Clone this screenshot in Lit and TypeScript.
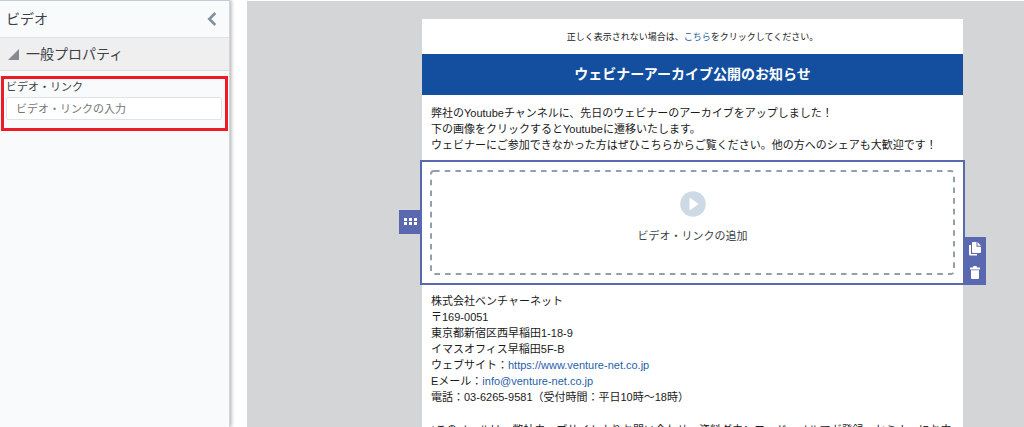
import { LitElement, html, css } from "lit";
import { customElement } from "lit/decorators.js";

@customElement("property-panel")
class PropertyPanel extends LitElement {
  static styles = css`
    :host {
      display: block;
      box-sizing: border-box;
      background: #f9fafc;
      border-top: 1px solid #c4cbd2;
      border-right: 1px solid #d2d6da;
      box-shadow: 1px 0 4px rgba(0, 0, 0, 0.35);
      color: #3c4146;
    }
    .head {
      display: flex;
      align-items: center;
      justify-content: space-between;
      height: 36px;
      padding: 0 12px 0 6px;
      border-bottom: 1px solid #dfe3e7;
    }
    h1,
    h2 {
      margin: 0;
      font-size: 14px;
      line-height: 20px;
      font-weight: 400;
    }
    button {
      display: flex;
      padding: 0;
      border: 0;
      background: none;
      cursor: pointer;
    }
    .section {
      display: flex;
      align-items: center;
      gap: 7px;
      height: 32px;
      padding: 0 8px;
      background: #efefef;
      border-bottom: 1px solid #dcdfe2;
    }
    .field {
      margin: 5px 1px 0;
      padding: 0 3px 8px 2px;
      border: 3px solid #ed1c24;
    }
    label {
      display: block;
      font-size: 11px;
      line-height: 16px;
      padding-bottom: 2px;
    }
    input {
      display: block;
      box-sizing: border-box;
      width: 100%;
      height: 23px;
      padding: 0 9px;
      border: 1px solid #dfe3e7;
      border-radius: 2px;
      background: #fff;
      font: inherit;
      font-size: 11px;
      color: #3c4146;
    }
    input::placeholder {
      color: #757575;
      opacity: 1;
    }
  `;

  render() {
    return html`
      <div class="head">
        <h1>ビデオ</h1>
        <button aria-label="パネルを閉じる">
          <svg width="10" height="14" viewBox="0 0 10 14">
            <path d="M8.3 1 2.3 7l6 6" fill="none" stroke="#81909e" stroke-width="2.6" />
          </svg>
        </button>
      </div>
      <div class="section">
        <svg width="11" height="11" viewBox="0 0 11 11"><path d="M11 0v11H0z" fill="#858b90" /></svg>
        <h2>一般プロパティ</h2>
      </div>
      <div class="field">
        <label for="video">ビデオ・リンク</label>
        <input id="video" type="text" placeholder="ビデオ・リンクの入力" />
      </div>
    `;
  }
}

@customElement("video-block")
class VideoBlock extends LitElement {
  static styles = css`
    :host {
      display: block;
      position: relative;
      margin: 0 -2px;
      padding: 8px;
      border: 2px solid #5a68b0;
      background: #fff;
    }
    .drop {
      display: grid;
      width: 100%;
      height: 105px;
      padding: 0;
      border: 0;
      background: none;
      font: inherit;
      font-size: 11px;
      line-height: 16px;
      color: #3c4146;
      cursor: pointer;
    }
    .frame,
    .content {
      grid-area: 1 / 1;
    }
    .frame {
      width: 100%;
      height: 105px;
    }
    .frame rect {
      width: calc(100% - 2px);
      height: calc(100% - 2px);
    }
    .content {
      display: flex;
      flex-direction: column;
      align-items: center;
      gap: 11px;
      padding-top: 21px;
    }
    .handle,
    .tools {
      position: absolute;
      display: flex;
      flex-direction: column;
      background: #5a68b0;
    }
    .handle {
      right: 100%;
      top: 48px;
    }
    .tools {
      left: 100%;
      bottom: -2px;
    }
    .tool {
      display: flex;
      align-items: center;
      justify-content: center;
      width: 23px;
      height: 24px;
      padding: 0;
      border: 0;
      background: none;
      cursor: pointer;
    }
  `;

  render() {
    return html`
      <div class="handle">
        <button class="tool" aria-label="移動">
          <svg width="13" height="8" viewBox="0 0 13 8" fill="#fff">
            <path d="M0 0h3v3H0zM5 0h3v3H5zM10 0h3v3h-3zM0 4h3v3H0zM5 4h3v3H5zM10 4h3v3h-3z" />
          </svg>
        </button>
      </div>
      <button class="drop">
        <svg class="frame" aria-hidden="true">
          <rect x="1" y="1" rx="3" fill="none" stroke="#93a0ab" stroke-width="2" stroke-dasharray="5.6 5.1" />
        </svg>
        <span class="content">
          <svg width="26" height="26" viewBox="0 0 26 26">
            <circle cx="13" cy="13" r="12.8" fill="#cddae6" />
            <path d="M9.5 6.5 18.7 13l-9.2 6.5z" fill="#fff" />
          </svg>
          ビデオ・リンクの追加
        </span>
      </button>
      <div class="tools">
        <button class="tool" aria-label="複製">
          <svg width="12" height="14" viewBox="0 0 12 14" fill="#fff">
            <path d="M0 3h2v9h6v1.500H1q-1 0-1-1z" />
            <path d="M4 0h3.500v4.800H12V10q0 1-1 1H4q-1 0-1-1V1q0-1 1-1z" />
            <path d="M8.500 0 12 3.700H8.500z" />
          </svg>
        </button>
        <button class="tool" aria-label="削除">
          <svg width="10" height="14" viewBox="0 0 10 14" fill="#fff">
            <path d="M0 1.500h2.800L3.600 0h2.800l.8 1.500H10v1.900H0zM1 4.200h8V12q0 1-1 1H2q-1 0-1-1z" />
          </svg>
        </button>
      </div>
    `;
  }
}

@customElement("app-root")
class AppRoot extends LitElement {
  static styles = css`
    :host {
      display: grid;
      grid-template-columns: 230px minmax(0, 1fr);
      gap: 17px;
      height: 100vh;
      overflow: hidden;
      background: #fff;
      font-family: "Liberation Sans", Arial, "Noto Sans CJK JP", sans-serif;
    }
    .canvas {
      display: flex;
      margin-top: 1px;
      padding: 18px 61px 0 175px;
      background: #d3d5d7;
      overflow: hidden;
    }
    .mail {
      flex: 1;
      min-width: 0;
      background: #fff;
      color: #1a1a1a;
      font-size: 11px;
      line-height: 16px;
    }
    a {
      color: #1f5fa8;
      text-decoration: none;
    }
    p {
      margin: 0;
    }
    .note {
      padding: 10px 0 9px;
      text-align: center;
      font-size: 9px;
    }
    h2 {
      margin: 0;
      padding: 8px 0 9px;
      background: #144e9f;
      color: #fff;
      text-align: center;
      font-size: 14px;
      line-height: 24px;
      font-weight: 700;
    }
    .text {
      padding: 10px 9px 7px;
    }
    .sign {
      padding: 8px 9px 0;
    }
    .foot {
      padding: 17px 9px;
    }
  `;

  render() {
    return html`
      <property-panel></property-panel>
      <main class="canvas">
        <article class="mail">
          <p class="note">正しく表示されない場合は、<a href="#">こちら</a>をクリックしてください。</p>
          <h2>ウェビナーアーカイブ公開のお知らせ</h2>
          <p class="text">
            弊社のYoutubeチャンネルに、先日のウェビナーのアーカイブをアップしました！<br />
            下の画像をクリックするとYoutubeに遷移いたします。<br />
            ウェビナーにご参加できなかった方はぜひこちらからご覧ください。他の方へのシェアも大歓迎です！
          </p>
          <video-block></video-block>
          <p class="sign">
            株式会社ベンチャーネット<br />
            〒169-0051<br />
            東京都新宿区西早稲田1-18-9<br />
            イマスオフィス早稲田5F-B<br />
            ウェブサイト：<a href="https://www.venture-net.co.jp">https://www.venture-net.co.jp</a><br />
            Eメール：<a href="mailto:info@venture-net.co.jp">info@venture-net.co.jp</a><br />
            電話：03-6265-9581（受付時間：平日10時～18時）
          </p>
          <p class="foot">
            *このメールは、弊社ウェブサイトよりお問い合わせ、資料ダウンロード、メルマガ登録、セミナーにお申
          </p>
        </article>
      </main>
    `;
  }
}
